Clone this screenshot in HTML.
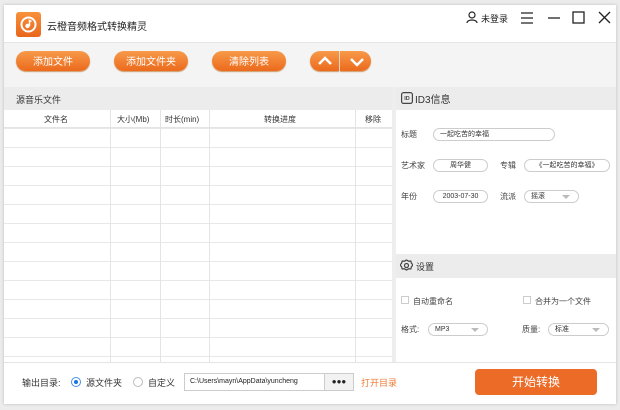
<!DOCTYPE html><html><head><meta charset="utf-8"><style>
*{margin:0;padding:0;box-sizing:border-box}
body{width:620px;height:410px;background:#ececec;font-family:"Liberation Sans","Noto Sans CJK SC",sans-serif;font-size:9px;color:#333;position:relative;overflow:hidden}
.win{position:absolute;left:4px;top:5px;width:612px;height:399px;background:#fff;box-shadow:0 0 3px #bbb}
.a{position:absolute}
.btn{position:absolute;top:51px;height:20px;border-radius:10px;background:linear-gradient(#f79a4a,#ec6a1c);color:#fff;font-size:10px;text-align:center;box-shadow:0 1px 1px #c96}
.btn span{position:absolute;left:0;right:0;top:6px;line-height:12px}
.pill{position:absolute;height:13px;border:1px solid #ccc;border-radius:7px;font-size:7px;display:flex;align-items:center;justify-content:center;line-height:1;color:#333}
.pl{justify-content:flex-start;padding-left:6px}
.tri{position:absolute;right:8px;top:4px;width:0;height:0;border-left:4px solid transparent;border-right:4px solid transparent;border-top:4px solid #bbb}
.lbl{position:absolute;font-size:8px;color:#444}
</style></head><body>
<div class="win"></div>
<div class="a" style="left:16px;top:12px;width:25px;height:25px;border-radius:3px;background:linear-gradient(#f8923c,#e9661b)"></div>
<svg class="a" style="left:16px;top:12px" width="25" height="25"><circle cx="12.5" cy="12.5" r="7" fill="none" stroke="#fff" stroke-width="2"/><circle cx="11.5" cy="14" r="2.2" fill="#fff"/><path d="M13.5 14V8.5l2 1" stroke="#fff" stroke-width="1.5" fill="none"/></svg>
<div class="a" style="left:47px;top:18px;font-size:10px;color:#222">云橙音频格式转换精灵</div>
<svg class="a" style="left:466px;top:11px" width="12" height="12"><circle cx="6" cy="4" r="3" fill="none" stroke="#222" stroke-width="1.2"/><path d="M1 12c0-4 10-4 10 0" fill="none" stroke="#222" stroke-width="1.2"/></svg>
<div class="a" style="left:481px;top:12px;font-size:9px;color:#222">未登录</div>
<svg class="a" style="left:520px;top:11px" width="92" height="14" stroke="#222" stroke-width="1.3" fill="none"><path d="M1 2h12M1 7h12M1 12h12"/><path d="M28 7h12"/><rect x="53" y="1" width="11" height="11"/><path d="M79 1l11 11M90 1L79 12"/></svg>
<div class="a" style="left:4px;top:42px;width:612px;height:1px;background:#e6e6e6"></div>
<div class="a" style="left:4px;top:43px;width:612px;height:44px;background:#f4f4f4"></div>
<div class="btn" style="left:16px;width:74px"><span>添加文件</span></div>
<div class="btn" style="left:114px;width:74px"><span>添加文件夹</span></div>
<div class="btn" style="left:212px;width:74px"><span>清除列表</span></div>
<div class="btn" style="left:310px;width:29px;border-radius:10px 0 0 10px"></div>
<div class="btn" style="left:340px;width:31px;border-radius:0 10px 10px 0"></div>
<svg class="a" style="left:310px;top:51px" width="62" height="20" stroke="#fff" stroke-width="2.5" fill="none"><path d="M9 13l6-6 6 6M41 8l6 6 6-6"/></svg>
<div class="a" style="left:4px;top:87px;width:388px;height:23px;background:#ececec"></div>
<div class="a" style="left:16px;top:93px;font-size:9px">源音乐文件</div>
<div class="a" style="left:4px;top:110px;width:388px;height:252px;background:repeating-linear-gradient(#fff 0,#fff 18px,#e8e8e8 18px,#e8e8e8 19px)"></div>
<div class="a" style="left:4px;top:110px;width:388px;height:18px;background:#fff;border-bottom:1px solid #e4e4e4"></div>
<div class="a" style="left:110px;top:110px;width:1px;height:252px;background:#e4e4e4"></div>
<div class="a" style="left:160px;top:110px;width:1px;height:252px;background:#e4e4e4"></div>
<div class="a" style="left:209px;top:110px;width:1px;height:252px;background:#e4e4e4"></div>
<div class="a" style="left:355px;top:110px;width:1px;height:252px;background:#e4e4e4"></div>
<div class="a" style="left:44px;top:114px;font-size:8px">文件名</div>
<div class="a" style="left:117px;top:114px;font-size:8px">大小(Mb)</div>
<div class="a" style="left:165px;top:114px;font-size:8px">时长(min)</div>
<div class="a" style="left:264px;top:114px;font-size:8px">转换进度</div>
<div class="a" style="left:365px;top:114px;font-size:8px">移除</div>
<div class="a" style="left:392px;top:87px;width:4px;height:275px;background:#eee"></div>
<div class="a" style="left:396px;top:87px;width:220px;height:23px;background:#ececec"></div>
<svg class="a" style="left:401px;top:92px" width="12" height="12"><rect x="0.6" y="0.6" width="10.8" height="10.8" rx="2" fill="none" stroke="#444" stroke-width="1.2"/><text x="6" y="8.2" font-size="5.5" font-weight="bold" text-anchor="middle" fill="#444" font-family="Liberation Sans">ID</text></svg>
<div class="a" style="left:415px;top:91px;font-size:10px">ID3信息</div>
<div class="lbl" style="left:401px;top:129px">标题</div>
<div class="pill pl" style="left:433px;top:128px;width:122px">一起吃苦的幸福</div>
<div class="lbl" style="left:401px;top:160px">艺术家</div>
<div class="pill" style="left:433px;top:159px;width:55px">周华健</div>
<div class="lbl" style="left:500px;top:160px">专辑</div>
<div class="pill" style="left:524px;top:159px;width:86px">《一起吃苦的幸福》</div>
<div class="lbl" style="left:401px;top:191px">年份</div>
<div class="pill" style="left:433px;top:190px;width:55px">2003-07-30</div>
<div class="lbl" style="left:500px;top:191px">流派</div>
<div class="pill pl" style="left:524px;top:190px;width:55px">摇滚<span class="tri"></span></div>
<div class="a" style="left:396px;top:254px;width:220px;height:24px;background:#ececec"></div>
<svg class="a" style="left:400px;top:259px" width="13" height="13" fill="none" stroke="#444" stroke-width="1.2"><path d="M6.5 1l2 1.2 2.3-.2.6 2.2 1.6 1.8-1.6 1.8-.6 2.2-2.3-.2-2 1.2-2-1.2-2.3.2-.6-2.2L0 6l1.6-1.8.6-2.2 2.3.2z"/><circle cx="6.5" cy="6.5" r="2"/></svg>
<div class="a" style="left:416px;top:260px;font-size:9px">设置</div>
<div class="a" style="left:401px;top:296px;width:8px;height:8px;border:1px solid #ccc"></div>
<div class="lbl" style="left:413px;top:296px">自动重命名</div>
<div class="a" style="left:523px;top:296px;width:8px;height:8px;border:1px solid #ccc"></div>
<div class="lbl" style="left:535px;top:296px">合并为一个文件</div>
<div class="lbl" style="left:401px;top:324px">格式:</div>
<div class="pill pl" style="left:428px;top:323px;width:60px">MP3<span class="tri"></span></div>
<div class="lbl" style="left:522px;top:324px">质量:</div>
<div class="pill pl" style="left:548px;top:323px;width:61px">标准<span class="tri"></span></div>
<div class="a" style="left:4px;top:362px;width:612px;height:1px;background:#e4e4e4"></div>
<div class="lbl" style="left:22px;top:376px;font-size:9px;color:#333">输出目录:</div>
<div class="a" style="left:71px;top:377px;width:10px;height:10px;border-radius:50%;border:1px solid #4a90e2"></div>
<div class="a" style="left:74px;top:380px;width:4px;height:4px;border-radius:50%;background:#1a73e8"></div>
<div class="lbl" style="left:86px;top:376px;font-size:9px;color:#333">源文件夹</div>
<div class="a" style="left:133px;top:377px;width:10px;height:10px;border-radius:50%;border:1px solid #bbb"></div>
<div class="lbl" style="left:148px;top:376px;font-size:9px;color:#333">自定义</div>
<div class="a" style="left:184px;top:373px;width:170px;height:18px;border:1px solid #ccc;font-size:7px;line-height:16px;padding-left:5px;color:#222">C:\Users\mayn\AppData\yuncheng</div>
<div class="a" style="left:324px;top:373px;width:30px;height:18px;border:1px solid #ccc;background:#f2f2f2;font-size:8px;line-height:15px;text-align:center;color:#222">●●●</div>
<div class="a" style="left:361px;top:376px;font-size:9px;color:#ee7a33">打开目录</div>
<div class="a" style="left:475px;top:369px;width:122px;height:26px;border-radius:4px;background:#ec6b27;color:#fff;font-size:12px;display:flex;align-items:center;justify-content:center;line-height:1">开始转换</div>
</body></html>
